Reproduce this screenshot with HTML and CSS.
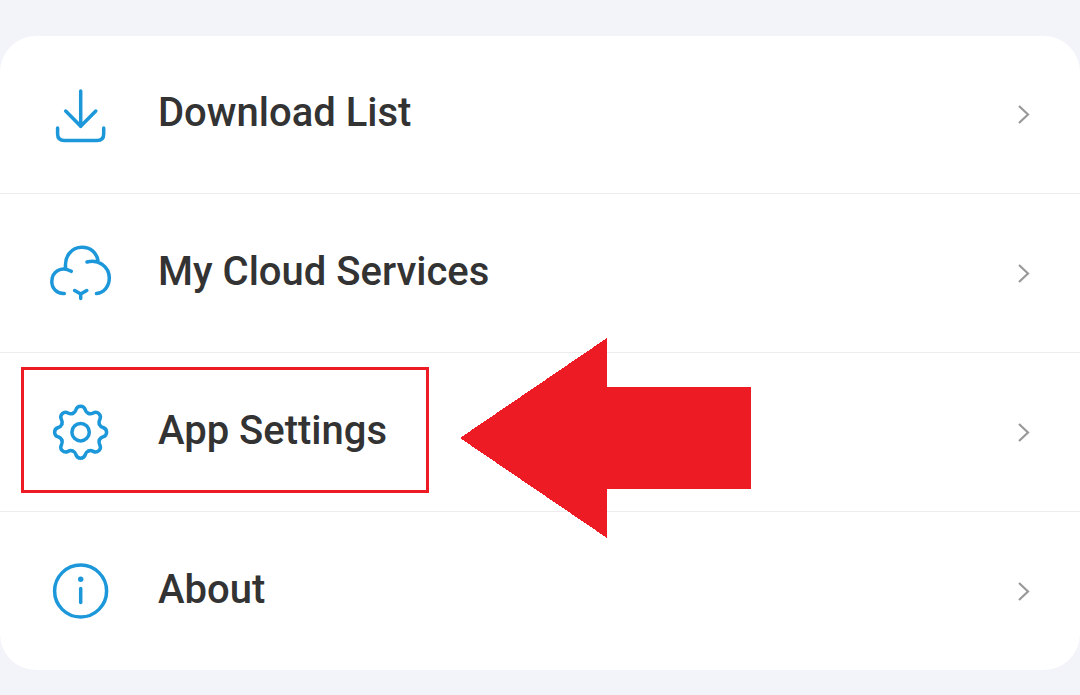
FILE: index.html
```html
<!DOCTYPE html>
<html lang="en">
<head>
<meta charset="utf-8">
<meta name="viewport" content="width=device-width, initial-scale=1">
<title>Menu</title>
<link rel="stylesheet" href="styles.css">
</head>
<body>
<nav class="menu">
  <a class="row" href="#">
    <svg class="icon" viewBox="0 0 80 80" aria-hidden="true">
      <path d="M40.7 17V52.5M25.7 37L40.7 52.2L55.8 37M17.6 54V60Q17.6 66.5 24.5 66.5H57Q63.7 66.5 63.7 60V54"/>
    </svg>
    <span class="label">Download List</span>
    <svg class="chevron" viewBox="0 0 16 24" aria-hidden="true"><path d="M3 4L12 12.5L3 21"/></svg>
  </a>
  <a class="row" href="#">
    <svg class="icon" viewBox="0 0 80 80" aria-hidden="true">
      <path d="M24.3 60.5C17 61 11.8 55.5 11.8 48.5C11.8 38.5 21.5 32.6 31.2 38.3M25.7 35.5C24 23.5 31.5 14.2 42 14.2C50.5 14.2 56.5 19.5 58 27.5M47 29C58.5 26 69.3 33.5 69.3 45C69.3 53.5 64 59.5 56.5 60.5M34.7 57.5L40.7 61L46.7 57.5M40.7 61V65.5"/>
    </svg>
    <span class="label">My Cloud Services</span>
    <svg class="chevron" viewBox="0 0 16 24" aria-hidden="true"><path d="M3 4L12 12.5L3 21"/></svg>
  </a>
  <a class="row" href="#">
    <svg class="icon" viewBox="0 0 80 80" aria-hidden="true">
      <defs>
        <path id="tooth" d="M-7.8 -18.8C-5.2 -19.9 -5.1 -21.2 -4.7 -22.4C-3.9 -24.9 -2.4 -26 0 -26C2.4 -26 3.9 -24.9 4.7 -22.4C5.1 -21.2 5.2 -19.9 7.8 -18.8"/>
      </defs>
      <g transform="translate(40.6 40.2)">
        <circle r="8.7"/>
        <use href="#tooth"/>
        <use href="#tooth" transform="rotate(45)"/>
        <use href="#tooth" transform="rotate(90)"/>
        <use href="#tooth" transform="rotate(135)"/>
        <use href="#tooth" transform="rotate(180)"/>
        <use href="#tooth" transform="rotate(225)"/>
        <use href="#tooth" transform="rotate(270)"/>
        <use href="#tooth" transform="rotate(315)"/>
      </g>
    </svg>
    <span class="label">App Settings</span>
    <svg class="chevron" viewBox="0 0 16 24" aria-hidden="true"><path d="M3 4L12 12.5L3 21"/></svg>
    <span class="highlight"></span>
    <svg class="arrow" viewBox="0 0 290 200" shape-rendering="crispEdges" aria-hidden="true">
      <path d="M-1 100L146 0V49H290V151H146V200Z"/>
    </svg>
  </a>
  <a class="row" href="#">
    <svg class="icon" viewBox="0 0 80 80" aria-hidden="true">
      <circle cx="40.6" cy="40" r="26"/>
      <path d="M40.7 37.5V51.5"/>
      <circle class="dot" cx="40.7" cy="28.3" r="2.7"/>
    </svg>
    <span class="label">About</span>
    <svg class="chevron" viewBox="0 0 16 24" aria-hidden="true"><path d="M3 4L12 12.5L3 21"/></svg>
  </a>
</nav>
</body>
</html>
```
FILE: styles.css
```css
* {
  box-sizing: border-box;
}

body {
  margin: 0;
  padding: 36px 0 24px;
  background: #f3f4f9;
  font-family: Roboto, "Liberation Sans", sans-serif;
}

.menu {
  background: #fff;
  border-radius: 36px;
}

.row {
  position: relative;
  display: flex;
  align-items: center;
  padding: 39px 48px 39px 40px;
  border-bottom: 1px solid #ededed;
  color: #333;
  text-decoration: none;
}

.row:first-child {
  padding-top: 38px;
}

.row:last-child {
  border-bottom: 0;
}

.icon {
  flex: none;
  width: 80px;
  height: 80px;
  fill: none;
  stroke: #1c98da;
  stroke-width: 3.5;
  stroke-linecap: round;
  stroke-linejoin: round;
}

.icon .dot {
  fill: #1c98da;
  stroke: none;
}

.label {
  flex: 1;
  padding: 0 0 2px 38px;
  font-size: 40px;
  font-weight: 500;
  line-height: 48px;
}

.chevron {
  flex: none;
  width: 16px;
  height: 24px;
  fill: none;
  stroke: #999;
  stroke-width: 2.2;
}

/* Callout frame and arrow over the settings row */
.highlight {
  position: absolute;
  top: 14px;
  left: 21px;
  width: 408px;
  height: 126px;
  border: 3px solid #ed1c24;
}

.arrow {
  position: absolute;
  z-index: 1;
  top: -15px;
  left: 461px;
  width: 290px;
  height: 200px;
  overflow: visible;
  fill: #ed1c24;
}
```
